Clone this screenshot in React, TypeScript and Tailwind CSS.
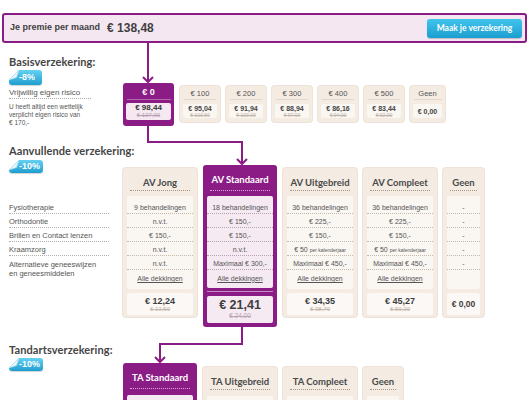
import React from 'react';

const PURPLE = '#8b1c86';

function Badge({ label, tall }: { label: string; tall?: boolean }) {
  return (
    <div
      className={`relative ${tall ? 'h-[15px] w-[33px]' : 'h-[13px] w-[34px]'} rounded-[3px] bg-linear-to-b from-[#63d1f2] to-[#1b9ed0] shadow-[0_1px_1px_rgba(0,0,0,0.18)] flex items-center pl-[10px]`}
    >
      <span className="text-white font-bold text-[9px] leading-none font-['Liberation_Sans',Arial,sans-serif]">{label}</span>
      <svg className="absolute left-0 top-0" width="11" height="11" viewBox="0 0 11 11">
        <polygon points="0,0 10,0 0,10" fill="#ffffff" />
        <polygon points="10,0 0,10 7.5,7.5" fill="#e8f6fc" stroke="#a6d8ec" strokeWidth="0.6" />
      </svg>
    </div>
  );
}

const baseCards = [
  { label: '€ 100', price: '€ 95,04', old: '€ 103,50' },
  { label: '€ 200', price: '€ 91,94', old: '€ 100,00' },
  { label: '€ 300', price: '€ 88,94', old: '€ 97,00' },
  { label: '€ 400', price: '€ 86,16', old: '€ 94,00' },
  { label: '€ 500', price: '€ 83,44', old: '€ 92,00' },
];

type Col = {
  name: string;
  vals: React.ReactNode[];
  price: string;
  old?: string;
  selected?: boolean;
  narrow?: boolean;
};

const per = (v: string) => (
  <span>
    {v} <span className="text-[5px]">per kalenderjaar</span>
  </span>
);

const avCols: Col[] = [
  { name: 'AV Jong', vals: ['9 behandelingen', 'n.v.t.', '€ 150,-', 'n.v.t.', 'n.v.t.'], price: '€ 12,24', old: '€ 13,50' },
  { name: 'AV Standaard', vals: ['18 behandelingen', '€ 150,-', '€ 150,-', 'n.v.t.', 'Maximaal € 300,-'], price: '€ 21,41', old: '€ 24,00', selected: true },
  { name: 'AV Uitgebreid', vals: ['36 behandelingen', '€ 225,-', '€ 150,-', per('€ 50'), 'Maximaal € 450,-'], price: '€ 34,35', old: '€ 38,70' },
  { name: 'AV Compleet', vals: ['36 behandelingen', '€ 225,-', '€ 150,-', per('€ 50'), 'Maximaal € 450,-'], price: '€ 45,27', old: '€ 50,30' },
  { name: 'Geen', vals: ['-', '-', '-', '-', '-'], price: '€ 0,00', narrow: true },
];

const taCols = [
  { name: 'TA Standaard', selected: true },
  { name: 'TA Uitgebreid' },
  { name: 'TA Compleet' },
  { name: 'Geen', narrow: true },
];

function Card({ col }: { col: Col }) {
  const sel = !!col.selected;
  const width = col.narrow ? 'w-[41px]' : 'w-[74px]';
  const top = sel ? '' : 'mt-[3px]';
  return (
    <div
      className={`${width} ${top} shrink-0 rounded-[3px] flex flex-col px-[4px] ${
        sel ? 'bg-[#8b1c86] pb-[4px]' : 'bg-[#f4ebe3] pb-[2px] shadow-[0_0_0_1px_#efe3d9]'
      }`}
    >
      <div
        className={`mx-[3px] pt-[8px] border-b border-dotted text-center font-['Lato',sans-serif] font-bold text-[9.5px] leading-[13px] whitespace-nowrap ${
          sel ? 'h-[26px] border-[#d9a6d3] text-white' : 'h-[23px] border-[#a69486] text-[#4a4a4a]'
        }`}
      >
        {col.name}
      </div>
      <div
        className={`mt-[5px] rounded-[2px] pt-[4px] flex flex-col ${sel ? 'h-[92px] bg-[#f5e9f2]' : 'h-[93px] bg-[#faf6f2]'}`}
      >
        {col.vals.map((v, i) => (
          <div
            key={i}
            className={`h-[14px] border-b border-dotted text-center text-[7px] leading-[15px] text-[#555] whitespace-nowrap overflow-hidden ${
              sel ? 'border-[#b9a0b5]' : 'border-[#c4b8ae]'
            }`}
          >
            {v}
          </div>
        ))}
        {!col.narrow && (
          <div className="flex-1 flex items-center justify-center text-[7px] text-[#555] underline">Alle dekkingen</div>
        )}
      </div>
      {sel && <div className="mt-[3px] h-px bg-[#c78bc1]" />}
      <div
        className={`rounded-[2px] flex flex-col items-center justify-center ${
          sel ? 'mt-[4px] h-[27px] bg-[#f5e9f2]' : 'mt-[4px] h-[22px] bg-[#fbf8f5]'
        }`}
      >
        <div className={`font-bold text-[#3d3d3d] ${sel ? 'text-[12.5px] leading-[13px]' : col.old ? 'text-[9px] leading-[10px]' : 'text-[8.5px] leading-[10px]'}`}>
          {col.price}
        </div>
        {col.old && (
          <div className={`line-through ${sel ? 'text-[6.5px] leading-[8px] text-[#b9a3b5]' : 'text-[6px] leading-[7px] text-[#c4b6ab]'}`}>
            {col.old}
          </div>
        )}
      </div>
    </div>
  );
}

function TaCard({ name, selected, narrow }: { name: string; selected?: boolean; narrow?: boolean }) {
  return (
    <div
      className={`${narrow ? 'w-[40px]' : 'w-[74px]'} ${selected ? 'bg-[#8b1c86]' : 'mt-[4px] bg-[#f4ebe3] shadow-[0_0_0_1px_#efe3d9]'} shrink-0 rounded-t-[3px] flex flex-col px-[4px] pb-[20px]`}
    >
      <div
        className={`mx-[3px] pt-[8px] border-b border-dotted text-center font-['Lato',sans-serif] font-bold text-[9.5px] leading-[13px] whitespace-nowrap ${
          selected ? 'h-[26px] border-[#d9a6d3] text-white' : 'h-[23px] border-[#a69486] text-[#4a4a4a]'
        }`}
      >
        {name}
      </div>
      <div className={`mt-[6px] h-[30px] rounded-[2px] ${selected ? 'bg-[#f5e9f2]' : 'bg-[#faf6f2]'}`} />
    </div>
  );
}

const headingCls = "h-[14px] leading-[14px] font-['Lato',sans-serif] font-bold text-[11px] tracking-[0.1px] text-[#454545] whitespace-nowrap";

export default function App() {
  return (
    <div className="relative w-[530px] h-[400px] overflow-hidden bg-white pt-[13px] font-['Liberation_Sans',Arial,sans-serif]">
      {/* top bar */}
      <div className="ml-[2px] w-[525px] h-[30px] border-2 border-[#8b1c86] rounded-[3px] bg-[#f5e7f2] flex items-center pl-[6px] pr-[3px]">
        <span className="font-bold text-[9px] text-[#3f3f3f]">Je premie per maand</span>
        <span className="ml-[7px] font-bold text-[12px] text-[#3f3f3f]">€ 138,48</span>
        <button className="ml-auto w-[95px] h-[19px] rounded-[3px] bg-linear-to-b from-[#40c4ec] to-[#1a9fd0] shadow-[0_1px_1px_rgba(0,0,0,0.2)] text-white font-bold text-[8.5px] font-['Lato',sans-serif]">
          Maak je verzekering
        </button>
      </div>

      {/* Basisverzekering */}
      <div className="flex pt-[12px]">
        <div className="w-[123px] shrink-0 pl-[9px]">
          <div className={headingCls}>Basisverzekering:</div>
          <div className="mt-[1px]">
            <Badge label="-8%" tall />
          </div>
          <div className="mt-[3px] w-[82px] h-[11px] border-b border-dotted border-[#a9a9a9] text-[8px] leading-[10px] text-[#555]">
            Vrijwillig eigen risico
          </div>
          <div className="mt-[4px] text-[6.5px] leading-[8px] text-[#555]">
            U heeft altijd een wettelijk
            <br />
            verplicht eigen risico van
            <br />€ 170,-
          </div>
        </div>
        <div className="mt-[28px] flex items-start gap-[6px]">
          <div className="w-[51px] h-[43px] rounded-[3px] bg-[#8b1c86] flex flex-col items-center pt-[4px]">
            <div className="h-[11px] leading-[11px] text-white font-bold text-[9px]">€ 0</div>
            <div className="mt-[1px] w-[44px] h-px bg-[#b866b0]" />
            <div className="mt-[3px] w-[45px] h-[17px] rounded-[2px] bg-[#f5e8f1] flex flex-col items-center pt-[1px]">
              <div className="text-[8px] leading-[8px] font-bold text-[#333]">€ 98,44</div>
              <div className="text-[6px] leading-[7px] line-through text-[#b7a0b3]">€ 107,00</div>
            </div>
          </div>
          {baseCards.map((c) => (
            <div key={c.label} className="mt-[3px] w-[40px] h-[36px] rounded-[3px] bg-[#f4ebe3] shadow-[0_0_0_1px_#efe3d9] flex flex-col items-center pt-[3px]">
              <div className="h-[10px] leading-[10px] text-[7.5px] text-[#555]">{c.label}</div>
              <div className="w-[32px] h-px bg-[#e4d6ca]" />
              <div className="mt-[4px] w-[34px] h-[14px] rounded-[2px] bg-[#faf6f2] flex flex-col items-center pt-[1px]">
                <div className="text-[7px] leading-[7px] font-bold text-[#444]">{c.price}</div>
                <div className="text-[5px] leading-[6px] line-through text-[#c0b3a8]">{c.old}</div>
              </div>
            </div>
          ))}
          <div className="mt-[3px] w-[35px] h-[36px] rounded-[3px] bg-[#f4ebe3] shadow-[0_0_0_1px_#efe3d9] flex flex-col items-center pt-[3px]">
            <div className="h-[10px] leading-[10px] text-[7.5px] text-[#555]">Geen</div>
            <div className="w-[28px] h-px bg-[#e4d6ca]" />
            <div className="mt-[4px] w-[29px] h-[14px] rounded-[2px] bg-[#faf6f2] flex items-center justify-center">
              <div className="text-[7px] leading-[7px] font-bold text-[#444]">€ 0,00</div>
            </div>
          </div>
        </div>
      </div>

      {/* Aanvullende verzekering */}
      <div className="flex mt-[17px]">
        <div className="w-[123px] shrink-0 pl-[9px]">
          <div className={headingCls}>Aanvullende verzekering:</div>
          <div className="mt-[2px]">
            <Badge label="-10%" />
          </div>
          <div className="mt-[27px] w-[100px]">
            {['Fysiotherapie', 'Orthodontie', 'Brillen en Contact lenzen', 'Kraamzorg'].map((l) => (
              <div key={l} className="h-[14px] border-b border-dotted border-[#b0b0b0] text-[7.5px] leading-[15px] text-[#555]">
                {l}
              </div>
            ))}
            <div className="pt-[4px] text-[7.5px] leading-[9px] text-[#555]">
              Alternatieve geneeswijzen
              <br />
              en geneesmiddelen
            </div>
          </div>
        </div>
        <div className="mt-[21px] flex items-start gap-[6px]">
          {avCols.map((c) => (
            <Card key={c.name} col={c} />
          ))}
        </div>
      </div>

      {/* Tandartsverzekering */}
      <div className="flex mt-[16px]">
        <div className="w-[123px] shrink-0 pl-[9px]">
          <div className={headingCls}>Tandartsverzekering:</div>
          <div className="mt-[1px]">
            <Badge label="-10%" />
          </div>
        </div>
        <div className="mt-[20px] flex items-start gap-[6px]">
          {taCols.map((c) => (
            <TaCard key={c.name} name={c.name} selected={c.selected} narrow={c.narrow} />
          ))}
        </div>
      </div>

      {/* connectors */}
      <svg className="absolute left-0 top-0 pointer-events-none" width="530" height="400" viewBox="0 0 530 400">
        <g fill="none" stroke={PURPLE} strokeWidth="2">
          <path d="M148 43 V82" />
          <path d="M143 77 L148 82 L153 77" />
          <path d="M148 126 V142 H242 V164" />
          <path d="M237 159 L242 164 L247 159" />
          <path d="M242 327 V344 H160 V362" />
          <path d="M155 357 L160 362 L165 357" />
        </g>
      </svg>
    </div>
  );
}
